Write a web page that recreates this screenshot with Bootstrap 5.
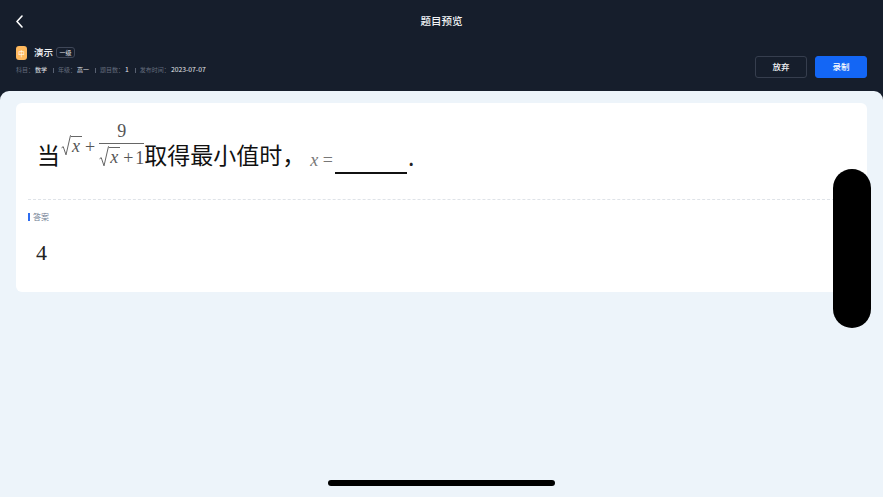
<!DOCTYPE html>
<html lang="zh">
<head>
<meta charset="utf-8">
<title>题目预览</title>
<link href="https://cdn.jsdelivr.net/npm/bootstrap@5.3.0/dist/css/bootstrap.min.css" rel="stylesheet">
<style>
html,body{height:100%;margin:0}
body{background:#161e2c;font-family:"Noto Sans CJK SC","Noto Sans",sans-serif;overflow:hidden}
.stage{width:883px;height:497px;position:relative}
.topbar{height:42px;padding:0 16px;position:relative}
.page-title{font-size:10.5px;color:#f2f4f7;line-height:1;font-weight:500}
.back-btn{position:absolute;left:15px;top:15px;width:9px;height:13px;display:block}
.infobar{height:49px;padding:4px 16px 0}
.level-mark{width:11px;height:14px;border-radius:3px;background:#ffb95e;color:#fff;font-size:6.5px;line-height:14px;text-align:center}
.paper-name{font-size:9.5px;color:#f0f2f5;margin:0 0 1px 7px;line-height:13px;font-weight:500}
.paper-tag{margin:0 0 1px 3px;width:19px;height:11px;border:1px solid #3f4758;border-radius:3px;color:#e6e8ec;font-size:6px;line-height:9px;text-align:center}
.meta-line{font-size:6px;line-height:8px;color:#646c7c;margin-top:5px;white-space:nowrap}
.meta-line b{font-weight:400;color:#e4e6ea;margin-left:1px}
.meta-line b.num{font-size:6.8px}
.meta-line i{font-style:normal;display:inline-block;width:1px;height:5px;background:#596172;margin:0 4px 0 6px;vertical-align:-0.5px}
.act-btn{width:52px;height:22px;border-radius:3px;font-size:8.5px;line-height:18px;padding:0 0 2px;color:#f2f4f7;font-weight:500}
.act-ghost{border:1px solid #363e4e;background:transparent}
.act-main{border:1px solid #1366f5;background:#1366f5;color:#fff}
.act-gap{gap:8px;margin-top:10px}
.sheet{height:406px;background:#edf4fa;border-radius:9px 9px 0 0;padding:12px 16px 0}
.qcard{height:189px;background:#fff;border-radius:6px;padding:0 12px}
.qline{height:96px;padding:8px 0 0 9px;color:#111;font-size:23px;line-height:1}
.cjk-run{margin-top:32px;white-space:nowrap}
.mth{font-family:"Liberation Serif",serif;color:#555;font-size:18px;line-height:1}
.mth em{font-style:italic}
.rad{display:inline-flex;align-items:flex-end}
.rad svg{display:block;width:10px;height:21px}
.rad span{border-top:1px solid #666;line-height:19px;padding:0 2px 0 1px;display:block}
.sum{margin:24px 0 0 1px;white-space:nowrap}
.plus{margin:0 2px 0 3px}
.frac{margin-left:2px;margin-top:11px;text-align:center}
.frac-top{font-size:18px;line-height:19px;border-bottom:1px solid #666;padding-bottom:2px}
.frac-bot{margin-top:2px}
.eqn{margin:40px 0 0 5px;color:#777;white-space:nowrap}
.blank{width:72px;height:1.5px;background:#111;margin:61px 0 0 2px}
.stop{font-size:23px;margin:34px 0 0 1px;line-height:1;color:#222}
.divide{border-top:1px dashed #dfe3e8}
.ans-label{margin-top:12px;font-size:8px;line-height:10px;color:#6d7a90;padding-left:5px;position:relative}
.ans-bar{position:absolute;left:0;top:1px;width:2px;height:8px;background:#2d6cf0}
.ans-value{font-family:"Liberation Serif",serif;font-size:22px;line-height:24px;color:#222;margin:19px 0 0 8px}
.pill-over{position:absolute;left:833px;top:169px;width:38px;height:159px;border-radius:19px;background:#000}
.home-ind{position:absolute;left:328px;top:480px;width:227px;height:6px;border-radius:3px;background:#000}
</style>
</head>
<body>
<div class="stage d-flex flex-column">
  <div class="topbar d-flex align-items-center justify-content-center">
    <svg class="back-btn" viewBox="0 0 9 13"><path d="M7 1 L2 6.5 L7 12" fill="none" stroke="#fff" stroke-width="1.6" stroke-linecap="round" stroke-linejoin="round"/></svg>
    <div class="page-title">题目预览</div>
  </div>
  <div class="infobar d-flex justify-content-between">
    <div>
      <div class="d-flex align-items-center">
        <div class="level-mark">中</div>
        <div class="paper-name">演示</div>
        <div class="paper-tag">一级</div>
      </div>
      <div class="meta-line">科目：<b>数学</b><i></i>年级：<b>高一</b><i></i>题目数：<b class="num">1</b><i></i>发布时间：<b class="num">2023-07-07</b></div>
    </div>
    <div class="d-flex act-gap align-items-start">
      <button type="button" class="btn act-btn act-ghost">放弃</button>
      <button type="button" class="btn act-btn act-main">录制</button>
    </div>
  </div>
  <div class="sheet">
    <div class="qcard">
      <div class="qline d-flex align-items-start">
        <span class="cjk-run">当</span>
        <div class="mth sum d-flex align-items-end">
          <span class="rad"><svg viewBox="0 0 9 18" preserveAspectRatio="none"><path d="M0.5 11 L2 10 L4.5 17 L8.5 0.5 L9 0.5" fill="none" stroke="#555" stroke-width="0.8"/></svg><span><em>x</em></span></span><span class="plus">+</span>
        </div>
        <div class="mth frac">
          <div class="frac-top">9</div>
          <div class="frac-bot d-flex align-items-end"><span class="rad"><svg viewBox="0 0 9 18" preserveAspectRatio="none"><path d="M0.5 11 L2 10 L4.5 17 L8.5 0.5 L9 0.5" fill="none" stroke="#555" stroke-width="0.8"/></svg><span><em>x</em></span></span><span class="plus">+</span><span>1</span></div>
        </div>
        <span class="cjk-run">取得最小值时，</span>
        <div class="mth eqn"><em>x</em> =</div>
        <div class="blank"></div>
        <div class="stop">.</div>
      </div>
      <div class="divide"></div>
      <div class="ans-label"><span class="ans-bar"></span>答案</div>
      <div class="ans-value">4</div>
    </div>
  </div>
  <div class="pill-over"></div>
  <div class="home-ind"></div>
</div>
<script src="https://cdn.jsdelivr.net/npm/bootstrap@5.3.0/dist/js/bootstrap.bundle.min.js"></script>
</body>
</html>
